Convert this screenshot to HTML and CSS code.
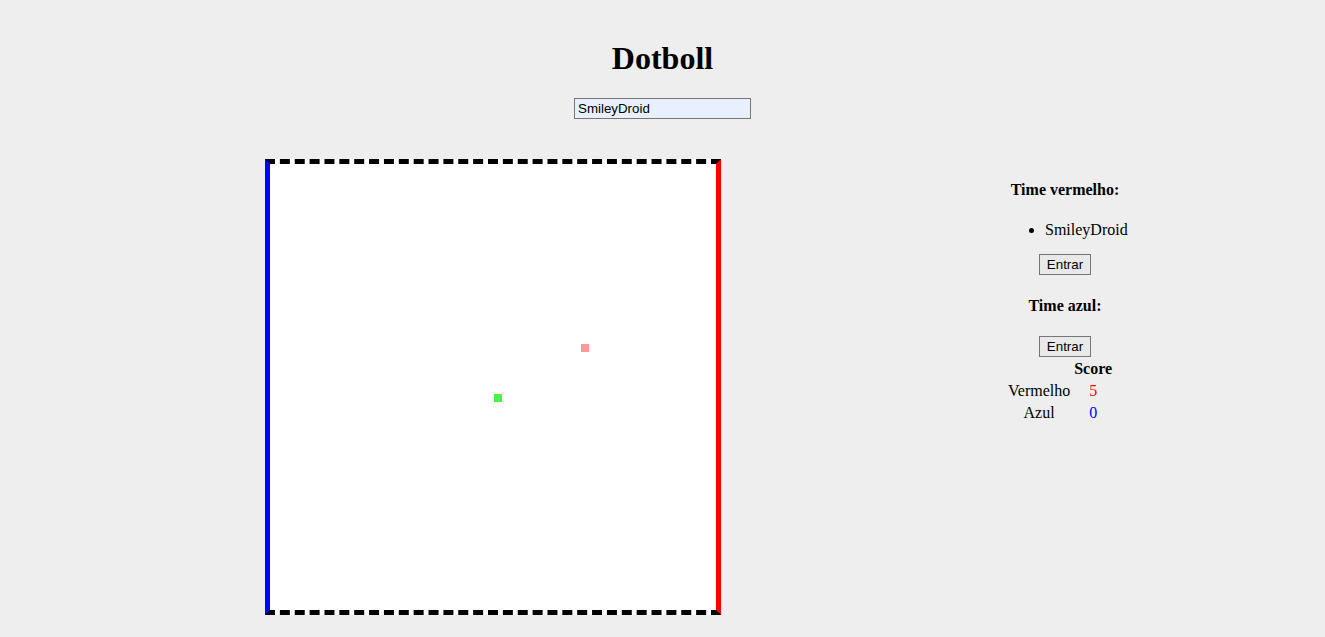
FILE: index.html
```html
<!DOCTYPE html>
<html>
<head>
<meta charset="utf-8">
<title>Dotboll</title>
<link rel="stylesheet" href="styles.css">
</head>
<body>
<h1 class="title">Dotboll</h1>
<input class="name-input" type="text" value="SmileyDroid">
<div class="game">
  <div class="board">
    <div class="dot dot-red dot-a"></div>
    <div class="dot dot-green dot-b"></div>
  </div>
  <div class="panel">
    <h4 class="team-title">Time vermelho:</h4>
    <ul class="team-list team-list-red">
      <li>SmileyDroid</li>
    </ul>
    <button class="join-btn">Entrar</button>
    <h4 class="team-title team-title-blue">Time azul:</h4>
    <ul class="team-list"></ul>
    <button class="join-btn">Entrar</button>
    <table class="score">
      <tr><th></th><th>Score</th></tr>
      <tr><td>Vermelho</td><td class="red">5</td></tr>
      <tr><td>Azul</td><td class="blue">0</td></tr>
    </table>
  </div>
</div>
</body>
</html>
```

FILE: styles.css
```css
html, body {
  background: #eeeeee;
}
body {
  margin: 8px;
  font-family: "Liberation Serif", "Times New Roman", serif;
  font-size: 16px;
  color: #000;
}
.title {
  text-align: center;
  font-size: 32px;
  line-height: 37px;
  margin: 32px 0 21px;
}
.name-input {
  display: block;
  margin: 0 auto;
  box-sizing: border-box;
  width: 177px;
  height: 21px;
  padding: 1px 3px;
  border: 1px solid #767676;
  background: #e8f0fe;
  font-family: "Liberation Sans", Arial, sans-serif;
  font-size: 13.333px;
  color: #000;
}
.game {
  display: flex;
  align-items: flex-start;
  margin-top: 40px;
  padding-left: 257px;
  gap: 284px;
}
.board {
  position: relative;
  width: 446px;
  height: 446px;
  background: #ffffff;
  border: 5px dashed #000;
  border-left: 5px solid #0000ff;
  border-right: 5px solid #ff0000;
  flex: none;
}
.dot {
  position: absolute;
  width: 8px;
  height: 8px;
}
.dot-red { background: #ff9999; }
.dot-green { background: #4cf04c; }
.dot-a { left: 311px; top: 180px; }
.dot-b { left: 224px; top: 230px; }
.panel {
  width: 120px;
  text-align: center;
  margin-top: 1px;
}
.team-title {
  font-size: 16px;
  margin: 21.28px 0;
}
.team-title-blue {
  margin-top: 22.28px;
}
.team-list {
  margin: 16px 0;
  padding-left: 40px;
}
.team-list-red {
  margin-bottom: 15px;
}
.join-btn {
  box-sizing: border-box;
  height: 21px;
  font-family: "Liberation Sans", Arial, sans-serif;
  font-size: 13.333px;
  color: #000;
  padding: 1px 7px;
  background: #e9e9e9;
  border: 1px solid #767676;
  border-radius: 0;
}
.score {
  font-size: 16px;
}
.score td, .score th {
  padding: 1px;
}
.red { color: #ff0000; }
.blue { color: #0000ff; }
```
